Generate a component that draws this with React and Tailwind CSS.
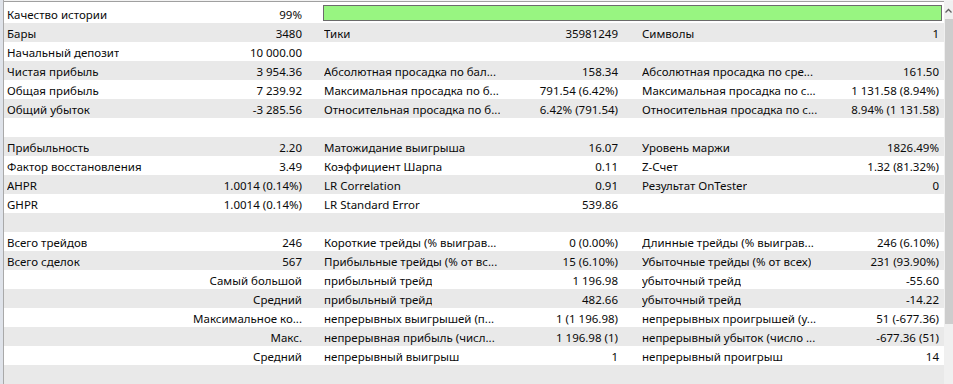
const rows = [
  null,
  [["Бары", "3480"], ["Тики", "35981249"], ["Символы", "1"]],
  [["Начальный депозит", "10 000.00"], ["", ""], ["", ""]],
  [["Чистая прибыль", "3 954.36"], ["Абсолютная просадка по бал...", "158.34"], ["Абсолютная просадка по сре...", "161.50"]],
  [["Общая прибыль", "7 239.92"], ["Максимальная просадка по б...", "791.54 (6.42%)"], ["Максимальная просадка по с...", "1 131.58 (8.94%)"]],
  [["Общий убыток", "-3 285.56"], ["Относительная просадка по б...", "6.42% (791.54)"], ["Относительная просадка по с...", "8.94% (1 131.58)"]],
  [["", ""], ["", ""], ["", ""]],
  [["Прибыльность", "2.20"], ["Матожидание выигрыша", "16.07"], ["Уровень маржи", "1826.49%"]],
  [["Фактор восстановления", "3.49"], ["Коэффициент Шарпа", "0.11"], ["Z-Счет", "1.32 (81.32%)"]],
  [["AHPR", "1.0014 (0.14%)"], ["LR Correlation", "0.91"], ["Результат OnTester", "0"]],
  [["GHPR", "1.0014 (0.14%)"], ["LR Standard Error", "539.86"], ["", ""]],
  [["", ""], ["", ""], ["", ""]],
  [["Всего трейдов", "246"], ["Короткие трейды (% выиграв...", "0 (0.00%)"], ["Длинные трейды (% выиграв...", "246 (6.10%)"]],
  [["Всего сделок", "567"], ["Прибыльные трейды (% от вс...", "15 (6.10%)"], ["Убыточные трейды (% от всех)", "231 (93.90%)"]],
  [["", "Самый большой"], ["прибыльный трейд", "1 196.98"], ["убыточный трейд", "-55.60"]],
  [["", "Средний"], ["прибыльный трейд", "482.66"], ["убыточный трейд", "-14.22"]],
  [["", "Максимальное ко..."], ["непрерывных выигрышей (п...", "1 (1 196.98)"], ["непрерывных проигрышей (у...", "51 (-677.36)"]],
  [["", "Макс."], ["непрерывная прибыль (числ...", "1 196.98 (1)"], ["непрерывный убыток (число ...", "-677.36 (51)"]],
  [["", "Средний"], ["непрерывный выигрыш", "1"], ["непрерывный проигрыш", "14"]],
  [["", ""], ["", ""], ["", ""]],
];

const pads = [
  ["pl-[3px]", "pr-[16px]"],
  ["pl-[6px]", "pr-[18px]"],
  ["pl-[6px]", "pr-[5px]"],
];

function Cell({ label, value, i }) {
  return (
    <div className={`flex justify-between whitespace-nowrap pt-[2px] leading-[17px] ${pads[i][0]} ${pads[i][1]}`}>
      <span className="overflow-hidden">{label}</span>
      <span>{value}</span>
    </div>
  );
}

export default function App() {
  return (
    <div className="flex w-[953px] h-[384px] overflow-hidden bg-white text-[11.5px] text-[#0a0a0a]" style={{ fontFamily: '"Noto Sans", "Liberation Sans", sans-serif' }}>
      <div className="w-[3px] bg-[#dfe3ea] border-r border-[#a9a9a9] box-content"></div>
      <div className="flex-1 flex flex-col">
        <div className="h-[1px] bg-[#f3f3f3]"></div>
        <div className="h-[1px] bg-[#a0a0a0]"></div>
        <div className="flex flex-1">
          <div className="w-[940px] pt-[3px]">
            <div className="grid grid-cols-[314px_626px] h-[19px]">
              <Cell label="Качество истории" value="99%" i={0} />
              <div className="pl-[5px] pr-[2px] pt-[1px]">
                <div className="h-[16px] bg-[#98f581] border border-[#6b6b6b]"></div>
              </div>
            </div>
            {rows.slice(1).map((r, k) => (
              <div key={k} className={`grid grid-cols-[314px_318px_308px] h-[19px] overflow-hidden ${k % 2 === 0 ? "bg-[#e9e9e9]" : "bg-white"}`}>
                {r.map((c, i) => (
                  <Cell key={i} label={c[0]} value={c[1]} i={i} />
                ))}
              </div>
            ))}
          </div>
          <div className="w-[9px] flex flex-col bg-[#f0f0f0]">
            <div className="h-[18px] flex items-center justify-end pr-[1px]">
              <svg width="7" height="5" viewBox="0 0 7 5">
                <path d="M0.5 4.5 L3.5 1.5 L6.5 4.5" fill="none" stroke="#606060" strokeWidth="1.3" />
              </svg>
            </div>
            <div className="h-[305px] ml-[1px] bg-[#cdcdcd]"></div>
          </div>
        </div>
      </div>
    </div>
  );
}
